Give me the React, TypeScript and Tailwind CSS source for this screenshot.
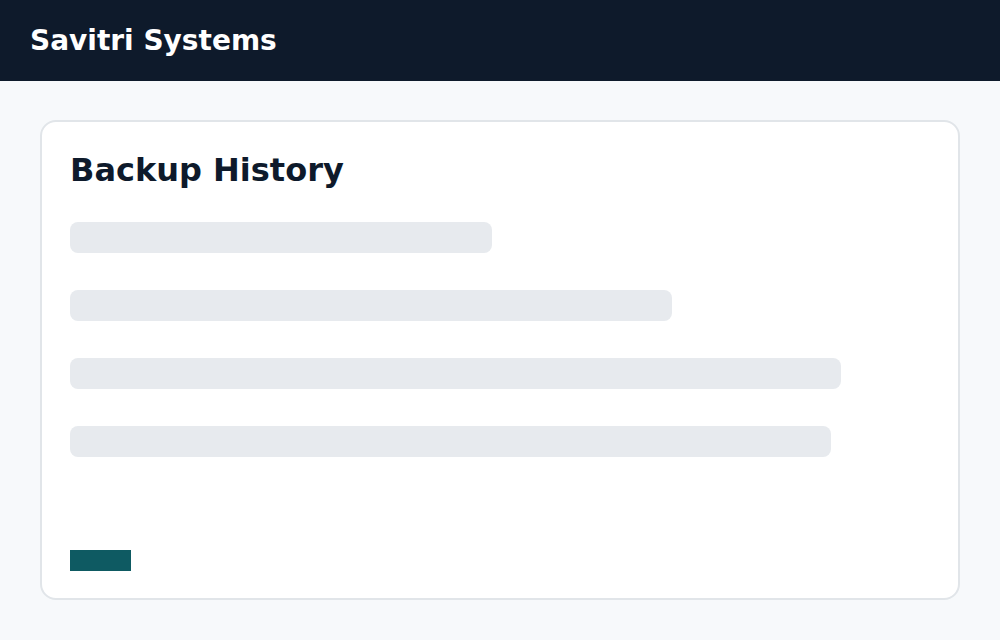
const rows = [422, 602, 771, 761]

export default function App() {
  return (
    <div className="min-h-screen bg-[#f7f9fb] font-['DejaVu_Sans',sans-serif]">
      <header className="flex h-[81px] items-center bg-[#0e1a2b] px-[30px]">
        <h1 className="text-[28px] font-bold text-white">Savitri Systems</h1>
      </header>

      <main className="px-[40px] pt-[39px]">
        <div className="flex h-[480px] flex-col rounded-[16px] border-2 border-[#e1e5e9] bg-white px-[28px] pb-[27px] pt-[28px]">
          <h2 className="text-[32px] font-bold leading-[40px] text-[#0e1a2b]">Backup History</h2>

          <div className="mt-[32px] flex flex-col gap-[37px]">
            {rows.map((w, i) => (
              <div key={i} className="h-[31px] rounded-[8px] bg-[#e7eaee]" style={{ width: w }} />
            ))}
          </div>

          <button className="mt-auto h-[21px] w-[61px] bg-[#0e5a62]" />
        </div>
      </main>
    </div>
  )
}
